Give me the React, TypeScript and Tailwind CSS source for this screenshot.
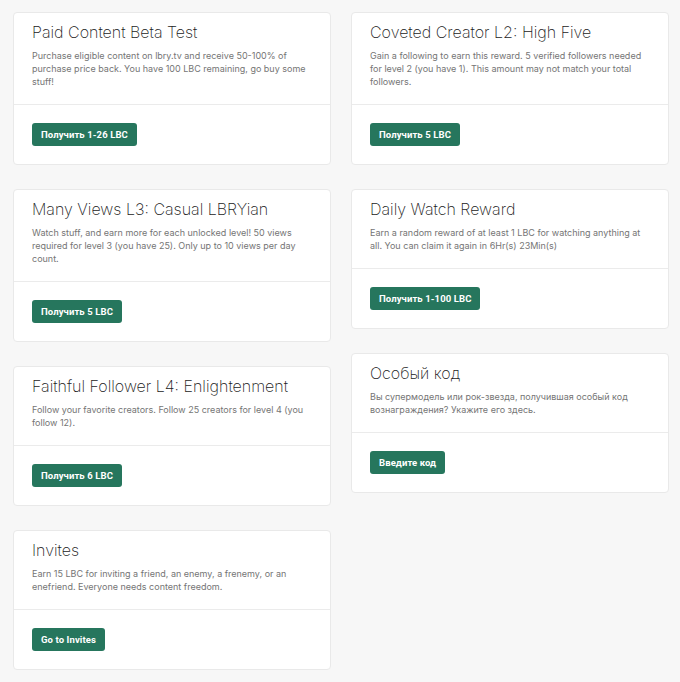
import React from "react";

type Reward = { title: string; desc: string; button: string };

const left: Reward[] = [
  {
    title: "Paid Content Beta Test",
    desc: "Purchase eligible content on lbry.tv and receive 50-100% of purchase price back. You have 100 LBC remaining, go buy some stuff!",
    button: "Получить 1-26 LBC",
  },
  {
    title: "Many Views L3: Casual LBRYian",
    desc: "Watch stuff, and earn more for each unlocked level! 50 views required for level 3 (you have 25). Only up to 10 views per day count.",
    button: "Получить 5 LBC",
  },
  {
    title: "Faithful Follower L4: Enlightenment",
    desc: "Follow your favorite creators. Follow 25 creators for level 4 (you follow 12).",
    button: "Получить 6 LBC",
  },
  {
    title: "Invites",
    desc: "Earn 15 LBC for inviting a friend, an enemy, a frenemy, or an enefriend. Everyone needs content freedom.",
    button: "Go to Invites",
  },
];

const right: Reward[] = [
  {
    title: "Coveted Creator L2: High Five",
    desc: "Gain a following to earn this reward. 5 verified followers needed for level 2 (you have 1). This amount may not match your total followers.",
    button: "Получить 5 LBC",
  },
  {
    title: "Daily Watch Reward",
    desc: "Earn a random reward of at least 1 LBC for watching anything at all. You can claim it again in 6Hr(s) 23Min(s)",
    button: "Получить 1-100 LBC",
  },
  {
    title: "Особый код",
    desc: "Вы супермодель или рок-звезда, получившая особый код вознаграждения? Укажите его здесь.",
    button: "Введите код",
  },
];

function Card({ r }: { r: Reward }) {
  return (
    <div className="bg-white border border-[#e9e9e9] rounded-[4px] mb-6">
      <div className="px-[18px] pt-[7px] pb-[16px] border-b border-[#ebebeb]">
        <div className="text-[16px] leading-[24px] font-extralight text-[#1a1a1a]">
          {r.title}
        </div>
        <div className="mt-[5px] text-[9px] leading-[13px] text-[#757575]">
          {r.desc}
        </div>
      </div>
      <div className="flex px-[18px] pt-[18px] pb-[18px]">
        <button className="h-[23px] leading-[23px] px-[9px] rounded-[3px] bg-[#26765d] text-white text-[9.5px] font-bold font-['Roboto',sans-serif] tracking-[0.1px]">
          {r.button}
        </button>
      </div>
    </div>
  );
}

export default function App() {
  return (
    <div className="min-h-[682px] bg-[#f7f7f7] pt-[12px] pl-[13px] flex gap-[20px] font-['Inter','Noto_Sans',sans-serif]">
      <div className="w-[318px] flex flex-col">
        {left.map((r) => (
          <Card key={r.title} r={r} />
        ))}
      </div>
      <div className="w-[318px] flex flex-col">
        {right.map((r) => (
          <Card key={r.title} r={r} />
        ))}
      </div>
    </div>
  );
}
